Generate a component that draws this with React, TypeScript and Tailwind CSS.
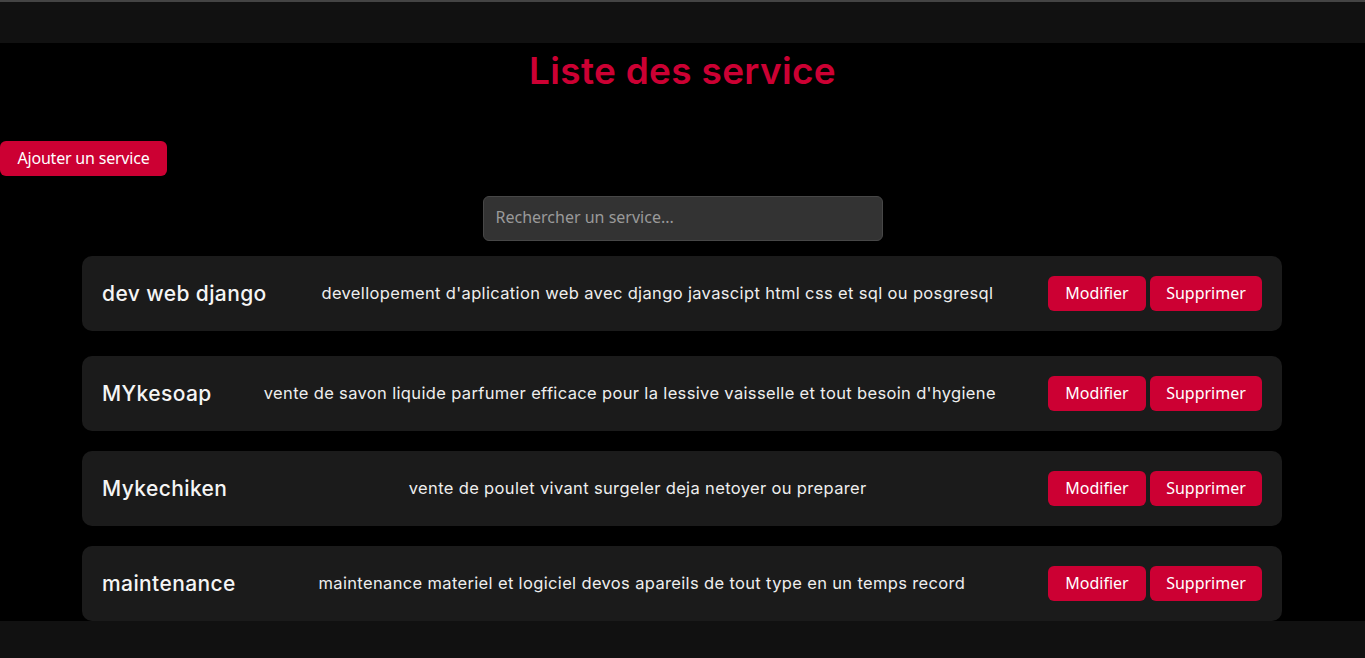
import React from "react";

const services = [
  { name: "dev web django", desc: "devellopement d'aplication web avec django javascipt html css et sql ou posgresql" },
  { name: "MYkesoap", desc: "vente de savon liquide parfumer efficace pour la lessive vaisselle et tout besoin d'hygiene" },
  { name: "Mykechiken", desc: "vente de poulet vivant surgeler deja netoyer ou preparer" },
  { name: "maintenance", desc: "maintenance materiel et logiciel devos apareils de tout type en un temps record" },
];

const poppins = { fontFamily: "Inter, 'Noto Sans', sans-serif" };

export default function App() {
  return (
    <div className="bg-black text-white relative overflow-hidden h-[658px]">
      <div className="h-[2px] bg-[#444444]" />
      <header className="h-[41px] bg-[#111111]" />
      <main>
        <h1
          className="text-center text-[37px] font-semibold text-[#cc0033] leading-[56px] tracking-[0.3px]"
          style={poppins}
        >
          Liste des service
        </h1>
        <div className="mt-[42px]">
          <button className="h-[35px] w-[167px] pb-[2px] rounded-[6px] bg-[#cc0033] text-white text-[16px] tracking-[-0.2px] font-['Noto_Sans',sans-serif]">
            Ajouter un service
          </button>
        </div>
        <div className="flex justify-center mt-[20px]">
          <input
            className="h-[45px] w-[400px] rounded-[6px] bg-[#333333] border border-[#474747] px-[12px] pb-[3px] text-[16px] text-white placeholder:text-[#9a9a9a] outline-none font-['Noto_Sans',sans-serif]"
            placeholder="Rechercher un service..."
          />
        </div>
        <div className="ml-[82px] w-[1200px] mt-[15px] flex flex-col gap-[20px]">
          {services.map((s, i) => (
            <div
              key={s.name}
              className={`h-[75px] rounded-[10px] bg-[#1b1b1b] flex items-center justify-between px-[20px] ${i === 0 ? "mb-[5px]" : ""}`}
            >
              <div className="text-[21px] font-medium text-[#f5f5f5] tracking-[0.4px]" style={poppins}>
                {s.name}
              </div>
              <div className="text-[16.5px] text-[#eeeeee] tracking-[0.35px]" style={poppins}>
                {s.desc}
              </div>
              <div className="flex gap-[4px]">
                <button className="h-[35px] w-[98px] pb-[2px] rounded-[6px] bg-[#cc0033] text-white text-[16px] font-['Noto_Sans',sans-serif]">
                  Modifier
                </button>
                <button className="h-[35px] w-[112px] pb-[2px] rounded-[6px] bg-[#cc0033] text-white text-[16px] font-['Noto_Sans',sans-serif]">
                  Supprimer
                </button>
              </div>
            </div>
          ))}
        </div>
      </main>
      <footer className="absolute left-0 right-0 bottom-0 h-[37px] bg-[#111111]" />
    </div>
  );
}
